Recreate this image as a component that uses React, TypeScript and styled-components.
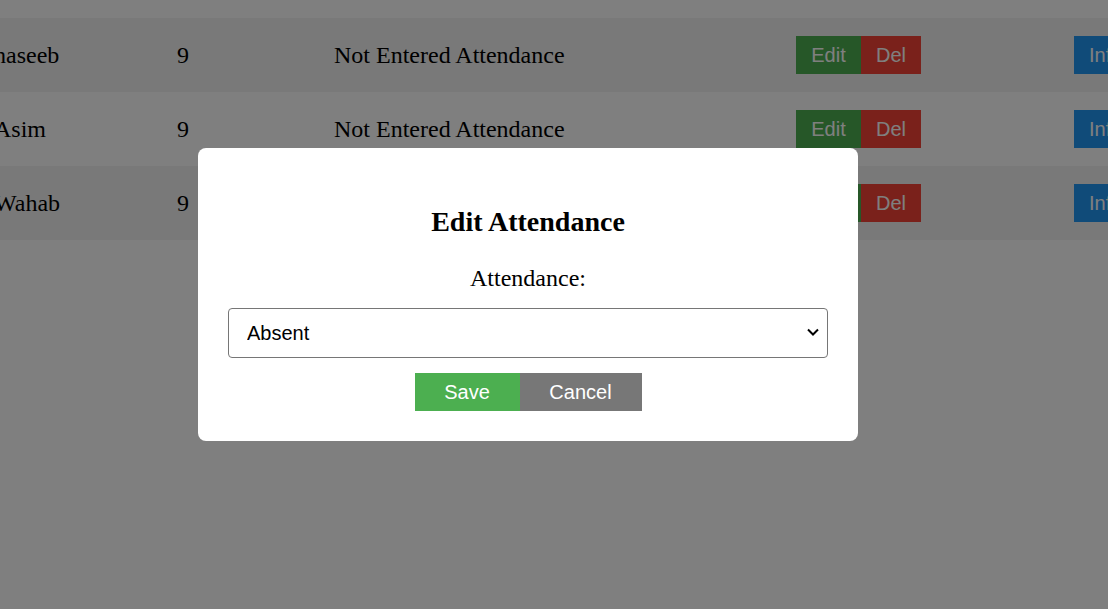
import React from "react";
import styled, { createGlobalStyle } from "styled-components";

const GlobalStyle = createGlobalStyle`
  html, body {
    margin: 0;
    padding: 0;
    background: #ffffff;
    overflow: hidden;
  }
  body {
    font-family: "Liberation Serif", "Times New Roman", serif;
  }
`;

const Page = styled.div`
  width: 1108px;
  height: 609px;
  overflow: hidden;
  padding-top: 18px;
  box-sizing: border-box;
`;

const Table = styled.div`
  display: flex;
  flex-direction: column;
  margin-left: -6px;
  width: 1200px;
`;

const Row = styled.div<{ $striped: boolean }>`
  display: grid;
  grid-template-columns: 183px 157px 462px 278px 1fr;
  align-items: center;
  height: 74px;
  background: ${(p) => (p.$striped ? "#f2f2f2" : "#ffffff")};
  font-size: 24px;
  color: #000;
`;

const Cell = styled.div`
  white-space: nowrap;
`;

const ActionGroup = styled.div`
  display: flex;
`;

const ActionButton = styled.button<{ $bg: string; $w?: number }>`
  background: ${(p) => p.$bg};
  color: #ffffff;
  border: none;
  border-radius: 0;
  height: 38px;
  width: ${(p) => (p.$w ? `${p.$w}px` : "auto")};
  padding: 0 15px;
  margin: 0;
  font-family: "Liberation Sans", Arial, sans-serif;
  font-size: 20px;
  white-space: nowrap;
  cursor: pointer;
`;

const Overlay = styled.div`
  position: fixed;
  inset: 0;
  background: rgba(0, 0, 0, 0.5);
  display: flex;
  align-items: center;
  justify-content: center;
  padding: 0 52px 20px 0;
`;

const Modal = styled.div`
  width: 660px;
  box-sizing: border-box;
  background: #ffffff;
  border-radius: 8px;
  padding: 30px;
  display: flex;
  flex-direction: column;
  align-items: center;
`;

const Title = styled.h2`
  margin: 28px 0 28px;
  font-size: 28px;
  line-height: 31px;
  font-weight: bold;
  text-align: center;
`;

const Label = styled.label`
  display: block;
  font-size: 24px;
  line-height: 27px;
  margin-bottom: 16px;
`;

const SelectWrap = styled.div`
  position: relative;
  width: 600px;
  height: 50px;
  margin-bottom: 15px;
`;

const Select = styled.select`
  appearance: none;
  -webkit-appearance: none;
  width: 100%;
  height: 100%;
  box-sizing: border-box;
  border: 1px solid #767676;
  border-radius: 4px;
  padding: 0 40px 0 18px;
  font-family: "Liberation Sans", Arial, sans-serif;
  font-size: 20px;
  color: #000;
  background: #fff;
`;

const Chevron = styled.svg`
  position: absolute;
  right: 8px;
  top: 19px;
  width: 14px;
  height: 10px;
  pointer-events: none;
`;

const ButtonRow = styled.div`
  display: flex;
`;

const ModalButton = styled.button<{ $bg: string; $w: number }>`
  background: ${(p) => p.$bg};
  color: #ffffff;
  border: none;
  border-radius: 0;
  height: 38px;
  width: ${(p) => p.$w}px;
  padding: 0;
  margin: 0;
  font-family: "Liberation Sans", Arial, sans-serif;
  font-size: 20px;
  cursor: pointer;
`;

const rows = [
  { name: "haseeb", cls: "9", status: "Not Entered Attendance" },
  { name: "Asim", cls: "9", status: "Not Entered Attendance" },
  { name: "Wahab", cls: "9", status: "Not Entered Attendance" },
];

export default function App() {
  return (
    <>
      <GlobalStyle />
      <Page>
        <Table>
          {rows.map((r, i) => (
            <Row key={i} $striped={i % 2 === 0}>
              <Cell>{r.name}</Cell>
              <Cell>{r.cls}</Cell>
              <Cell>{r.status}</Cell>
              <ActionGroup>
                <ActionButton $bg="#4CAF50" $w={65}>Edit</ActionButton>
                <ActionButton $bg="#f44336" $w={60}>Del</ActionButton>
              </ActionGroup>
              <ActionGroup>
                <ActionButton $bg="#2196F3">Info</ActionButton>
              </ActionGroup>
            </Row>
          ))}
        </Table>
      </Page>
      <Overlay>
        <Modal>
          <Title>Edit Attendance</Title>
          <Label htmlFor="att">Attendance:</Label>
          <SelectWrap>
            <Select id="att" defaultValue="Absent">
              <option value="Present">Present</option>
              <option value="Absent">Absent</option>
              <option value="Leave">Leave</option>
            </Select>
            <Chevron viewBox="0 0 14 10">
              <path d="M2 2.5 L7 7.5 L12 2.5" fill="none" stroke="#000" strokeWidth="2" />
            </Chevron>
          </SelectWrap>
          <ButtonRow>
            <ModalButton $bg="#4CAF50" $w={105}>Save</ModalButton>
            <ModalButton $bg="#777777" $w={122}>Cancel</ModalButton>
          </ButtonRow>
        </Modal>
      </Overlay>
    </>
  );
}
